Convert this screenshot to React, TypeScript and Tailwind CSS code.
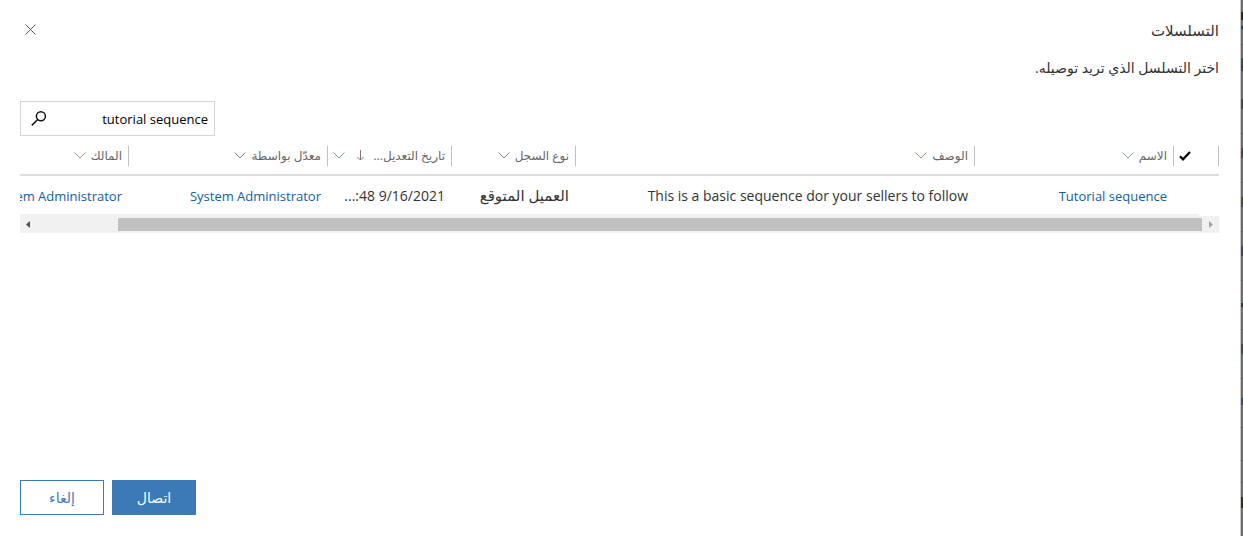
import React from "react";

const text = "font-['Open_Sans','DejaVu_Sans',sans-serif]";

function Chevron({ color }: { color: string }) {
  return (
    <svg width="12" height="8" viewBox="0 0 12 8" fill="none" stroke={color} className="shrink-0" aria-hidden="true">
      <path d="M0.5 0.5 6 6 11.5 0.5" />
    </svg>
  );
}

const columns = [
  { label: "الاسم", width: "w-[199px]", color: "#8aa3b5" },
  { label: "الوصف", width: "w-[399px]", color: "#b08f80" },
  { label: "نوع السجل", width: "w-[124px]", color: "#8c84a0" },
  { label: "تاريخ التعديل...", width: "w-[124px]", color: "#7f9cc0", sorted: true },
  { label: "معدّل بواسطة", width: "w-[199px]", color: "#85809a" },
  { label: "المالك", width: "w-[199px]", color: "#b09388" },
];

const marks = [
  "mt-3 h-2 bg-[#3a2416]",
  "mt-[6px] h-[3px] bg-[#1d3f8a]",
  "mt-[15px] h-px bg-[#595b5c]",
  "mt-[13px] h-[13px] bg-[#2c4a6b]",
  "mt-7 h-[10px] bg-[#5a4438]",
  "mt-6 h-px bg-[#595b5c]",
  "mt-[14px] h-[10px] bg-[#5a4438]",
  "mt-6 h-px bg-[#5a5c5d]",
  "mt-[14px] h-[10px] bg-[#5a4439]",
  "mt-6 h-px bg-[#5a5b5d]",
  "mt-[14px] h-[10px] bg-[#3b4c66]",
  "mt-6 h-px bg-[#585b5d]",
  "mt-[22px] h-1 bg-[#263c5c]",
  "mt-[22px] h-px bg-[#595b5d]",
  "mt-[14px] h-[10px] bg-[#3b4c67]",
  "mt-6 h-px bg-[#595a5d]",
  "mt-[19px] h-[7px] bg-[#33507c]",
  "mt-[22px] h-px bg-[#595a5c]",
  "mt-8 h-px bg-[#595a5b]",
  "mt-[21px] h-px bg-[#58595b]",
  "mt-[14px] h-[11px] bg-[#33302c]",
];

export default function App() {
  return (
    <div dir="rtl" className={`flex min-h-screen bg-white text-[#333] ${text}`}>
      <div className="w-[2px] shrink-0 overflow-hidden bg-[#6b6d6e]" aria-hidden="true">
        {marks.map((m) => (
          <div key={m} className={m} />
        ))}
      </div>
      <main className="flex min-w-0 flex-1 flex-col border-r border-[#c8c8c8] pr-[21px] pl-5">
        <header className="flex items-start justify-between pt-[18px]">
          <h1 className="text-[15px] leading-6">التسلسلات</h1>
          <button aria-label="إغلاق" className="mt-[6px] ml-[5px]">
            <svg width="11" height="11" viewBox="0 0 11 11" fill="none" stroke="#555">
              <path d="M0.5 0.5 10.5 10.5M10.5 0.5 0.5 10.5" />
            </svg>
          </button>
        </header>
        <p className="mt-4 text-sm leading-5">اختر التسلسل الذي تريد توصيله.</p>

        <div className="mt-[23px] flex h-[35px] w-[195px] items-center self-end border border-[#d6d6d6] pr-[6px] pl-[10px]">
          <input
            aria-label="بحث"
            defaultValue="tutorial sequence"
            className="min-w-0 flex-1 pt-[2px] text-[13px] text-black outline-none"
          />
          <button aria-label="بحث">
            <svg width="16" height="16" viewBox="0 0 16 16" fill="none" stroke="#111" strokeWidth="1.5">
              <circle cx="9.9" cy="5.3" r="4.5" />
              <path d="M6.7 8.5 0.8 14.4" />
            </svg>
          </button>
        </div>

        <div className="mt-[10px] overflow-hidden">
          <table className="w-[1289px] min-w-full table-fixed border-collapse">
            <thead>
              <tr className="h-[29px] border-b-2 border-[#dedede] align-top">
                <th className="w-[45px] p-0">
                  <div className="flex h-5 items-center justify-end border-r border-[#c0c0c0] pl-[5px]">
                    <svg width="12" height="10" viewBox="0 0 12 10" fill="none" stroke="#000" strokeWidth="2.2" aria-label="تحديد">
                      <path d="M1 5.2 4 8.3 11 1" />
                    </svg>
                  </div>
                </th>
                {columns.map((c) => (
                  <th key={c.label} className={`p-0 font-normal ${c.width}`}>
                    <div className="flex h-5 items-center gap-[5px] border-r border-[#c0c0c0] pr-[6px] text-xs whitespace-nowrap text-[#666]">
                      <span>{c.label}</span>
                      {c.sorted && (
                        <svg width="18" height="12" viewBox="0 0 18 12" fill="none" stroke="#8a7080" aria-hidden="true">
                          <path d="M10.5 0v10M7.5 7l3 3 3-3" />
                        </svg>
                      )}
                      <Chevron color={c.color} />
                    </div>
                  </th>
                ))}
              </tr>
            </thead>
            <tbody>
              <tr className="h-[39px] text-[13px] whitespace-nowrap">
                <td />
                <td className="p-0 pt-[3px] pr-[7px]"><a href="#sequence" className="text-[#1160a0]">Tutorial sequence</a></td>
                <td className="p-0 pt-[2px] pr-[7px] text-right text-sm" dir="ltr">This is a basic sequence dor your sellers to follow</td>
                <td className="p-0 pr-[7px] text-[15px]">العميل المتوقع</td>
                <td className="p-0 pt-[2px] pr-[7px] text-right text-sm" dir="ltr">...:48 9/16/2021</td>
                <td className="p-0 pt-[3px] pr-[7px]"><a href="#modified-by" className="text-[#1160a0]">System Administrator</a></td>
                <td className="p-0 pt-[3px] pr-[7px]"><a href="#owner" className="text-[#1160a0]">System Administrator</a></td>
              </tr>
            </tbody>
          </table>
        </div>
        <div className="mr-5 h-[2px] bg-[#f1f1f1]" />
        <div className="flex h-[17px] items-center bg-[#f1f1f1]" aria-hidden="true">
          <svg width="17" height="17" viewBox="0 0 17 17" className="shrink-0"><path d="M7 5v7l4-3.5z" fill="#a3a3a3" /></svg>
          <div className="h-[13px] flex-1 bg-[#c1c1c1]" />
          <div className="w-[81px]" />
          <svg width="17" height="17" viewBox="0 0 17 17" className="shrink-0"><path d="M10 5v7L6 8.5z" fill="#505050" /></svg>
        </div>

        <footer className="mt-auto flex justify-end gap-2 pb-[21px] text-sm">
          <button className="h-[35px] w-[84px] bg-[#3b79b7] text-white">اتصال</button>
          <button className="h-[35px] w-[84px] border border-[#3b79b7] text-[#3b79b7]">إلغاء</button>
        </footer>
      </main>
    </div>
  );
}
